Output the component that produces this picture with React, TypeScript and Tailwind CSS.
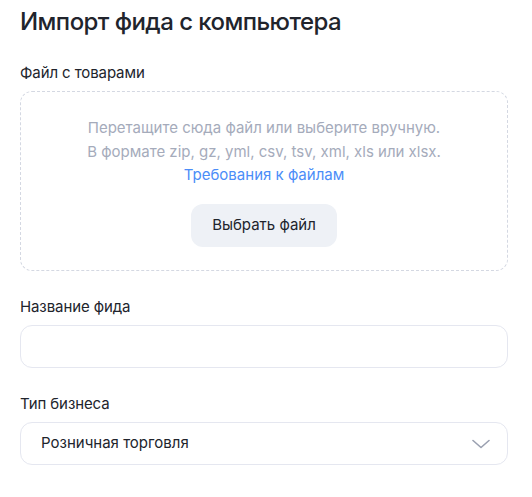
import React from 'react';

const App: React.FC = () => {
  return (
    <div className="w-[532px] h-[497px] bg-white pl-5 pr-6 pt-[6px]" style={{ fontFamily: 'Inter, "Noto Sans", sans-serif' }}>
      <h1 className="text-[24px] leading-[32px] font-medium text-[#21242c] tracking-[-0.55px]">Импорт фида с компьютера</h1>

      <div className="mt-[25px] text-[15px] leading-[20px] text-[#21242c] tracking-[-0.1px]">Файл с товарами</div>
      <div className="mt-[8px] h-[180px] border border-dashed border-[#d4d8e2] rounded-[12px] flex flex-col items-center pt-[24px]">
        <p className="text-[15px] leading-[23.5px] text-[#a5abbb] text-center">
          Перетащите сюда файл или выберите вручную.
          <br />
          В формате zip, gz, yml, csv, tsv, xml, xls или xlsx.
        </p>
        <a className="text-[15px] leading-[23.5px] text-[#4b8df8]">Требования к файлам</a>
        <button className="mt-[17px] w-[146px] h-[43px] rounded-[12px] bg-[#eef1f6] text-[15px] text-[#21242c]">
          Выбрать файл
        </button>
      </div>

      <div className="mt-[26px] text-[15px] leading-[20px] text-[#21242c] tracking-[-0.1px]">Название фида</div>
      <div className="mt-[8px] h-[43px] border border-[#e5e7f0] rounded-[12px]" />

      <div className="mt-[26px] text-[15px] leading-[20px] text-[#21242c] tracking-[-0.1px]">Тип бизнеса</div>
      <div className="mt-[8px] h-[43px] border border-[#e5e7f0] rounded-[12px] flex items-center justify-between pl-5 pr-[17px]">
        <span className="text-[15px] text-[#21242c]">Розничная торговля</span>
        <svg width="18" height="10" viewBox="0 0 18 10" fill="none">
          <path d="M1 1.5L9 8.5L17 1.5" stroke="#9aa0b0" strokeWidth="1.6" strokeLinecap="round" strokeLinejoin="round" />
        </svg>
      </div>
    </div>
  );
};

export default App;
